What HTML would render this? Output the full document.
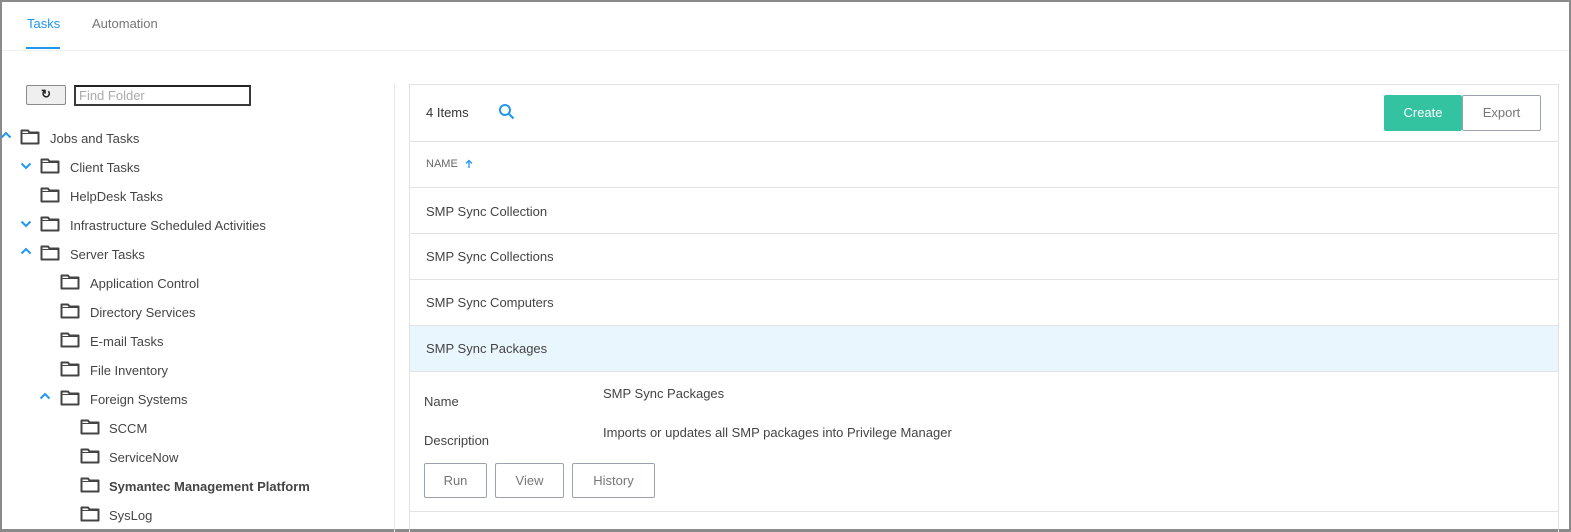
<!DOCTYPE html>
<html><head><meta charset="utf-8"><style>
*{margin:0;padding:0;box-sizing:border-box}
body{width:1571px;height:532px;overflow:hidden;background:#fff;font-family:"Liberation Sans",Arial,sans-serif;color:#444;font-size:13px;position:relative}
.frame{position:absolute;left:0;top:0;width:1571px;height:532px;border:2px solid #8a8a8a;border-bottom-width:3px}
.a{position:absolute;white-space:nowrap}
.fold{position:absolute;width:20px;height:16px}
.chev{position:absolute;width:12px;height:8px}
.row{position:absolute;left:410px;width:1148px;border-bottom:1px solid #e2e2e2}
.btn{position:absolute;border:1px solid #9aa3ad;border-radius:2px;color:#777;font-size:13px;text-align:center;background:#fff}
</style></head><body>
<div class="frame"></div>
<div class="a" style="left:27px;top:16px;color:#2196f3;font-size:13px">Tasks</div>
<div class="a" style="left:26px;top:47px;width:34px;height:2px;background:#2196f3"></div>
<div class="a" style="left:92px;top:16px;color:#777">Automation</div>
<div class="a" style="left:2px;top:50px;width:1567px;height:1px;background:#f0f0f0"></div>

<div class="a" style="left:26px;top:85px;width:40px;height:20px;border:1px solid #8a8a8a;border-radius:2px;background:#efefef;font-size:12px;text-align:center;line-height:17px;color:#222;font-weight:bold">&#8635;</div>
<div class="a" style="left:74px;top:85px;width:177px;height:21px;border:2px solid #3a3a3a;border-top-color:#222;color:#aaa;font-size:13px;padding-left:3px;line-height:17px">Find Folder</div>
<div class="a" style="left:394px;top:83px;width:1px;height:449px;background:#e6e6e6"></div>

<svg width="0" height="0" style="position:absolute"><defs>
<symbol id="f" viewBox="0 0 20 16"><path d="M1.5 1.5 H8 L9.5 3.5 H18.5 V14.5 H1.5 Z" fill="none" stroke="#444" stroke-width="2" stroke-linejoin="round"/><path d="M1.5 4.5 H18.5" stroke="#444" stroke-width="1"/></symbol>
<symbol id="up" viewBox="0 0 12 8"><path d="M1.5 6.5 L6 2 L10.5 6.5" fill="none" stroke="#2196f3" stroke-width="2"/></symbol>
<symbol id="dn" viewBox="0 0 12 8"><path d="M1.5 1.5 L6 6 L10.5 1.5" fill="none" stroke="#2196f3" stroke-width="2"/></symbol>
</defs></svg>

<svg class="chev" style="left:0;top:131px"><use href="#up"/></svg>
<svg class="fold" style="left:20px;top:129px"><use href="#f"/></svg>
<div class="a" style="left:50px;top:131px">Jobs and Tasks</div>

<svg class="chev" style="left:20px;top:162px"><use href="#dn"/></svg>
<svg class="fold" style="left:40px;top:158px"><use href="#f"/></svg>
<div class="a" style="left:70px;top:160px">Client Tasks</div>

<svg class="fold" style="left:40px;top:187px"><use href="#f"/></svg>
<div class="a" style="left:70px;top:189px">HelpDesk Tasks</div>

<svg class="chev" style="left:20px;top:220px"><use href="#dn"/></svg>
<svg class="fold" style="left:40px;top:216px"><use href="#f"/></svg>
<div class="a" style="left:70px;top:218px">Infrastructure Scheduled Activities</div>

<svg class="chev" style="left:20px;top:247px"><use href="#up"/></svg>
<svg class="fold" style="left:40px;top:245px"><use href="#f"/></svg>
<div class="a" style="left:70px;top:247px">Server Tasks</div>

<svg class="fold" style="left:60px;top:274px"><use href="#f"/></svg>
<div class="a" style="left:90px;top:276px">Application Control</div>
<svg class="fold" style="left:60px;top:303px"><use href="#f"/></svg>
<div class="a" style="left:90px;top:305px">Directory Services</div>
<svg class="fold" style="left:60px;top:332px"><use href="#f"/></svg>
<div class="a" style="left:90px;top:334px">E-mail Tasks</div>
<svg class="fold" style="left:60px;top:361px"><use href="#f"/></svg>
<div class="a" style="left:90px;top:363px">File Inventory</div>
<svg class="chev" style="left:39px;top:392px"><use href="#up"/></svg>
<svg class="fold" style="left:60px;top:390px"><use href="#f"/></svg>
<div class="a" style="left:90px;top:392px">Foreign Systems</div>

<svg class="fold" style="left:80px;top:419px"><use href="#f"/></svg>
<div class="a" style="left:109px;top:421px">SCCM</div>
<svg class="fold" style="left:80px;top:448px"><use href="#f"/></svg>
<div class="a" style="left:109px;top:450px">ServiceNow</div>
<svg class="fold" style="left:80px;top:477px"><use href="#f"/></svg>
<div class="a" style="left:109px;top:479px;font-weight:bold">Symantec Management Platform</div>
<svg class="fold" style="left:80px;top:506px"><use href="#f"/></svg>
<div class="a" style="left:109px;top:508px">SysLog</div>

<div class="a" style="left:409px;top:84px;width:1150px;height:448px;border:1px solid #e2e2e2;border-bottom:none"></div>
<div class="row" style="top:85px;height:57px"></div>
<div class="a" style="left:426px;top:105px;color:#333">4 Items</div>
<svg class="a" style="left:498px;top:103px" width="18" height="18" viewBox="0 0 18 18"><circle cx="7" cy="7" r="5" fill="none" stroke="#2196f3" stroke-width="2"/><path d="M10.5 10.5 L15.5 15.5" stroke="#2196f3" stroke-width="2.2"/></svg>
<div class="a" style="left:1384px;top:95px;width:78px;height:36px;background:#33c3a0;border-radius:2px;color:#fff;text-align:center;line-height:36px">Create</div>
<div class="btn" style="left:1462px;top:95px;width:79px;height:36px;line-height:34px">Export</div>

<div class="row" style="top:142px;height:46px"></div>
<div class="a" style="left:426px;top:158px;font-size:11px;color:#666">NAME</div>
<svg class="a" style="left:465px;top:159px" width="8" height="10" viewBox="0 0 8 10"><path d="M4 9 V2 M1 4.5 L4 1.5 L7 4.5" fill="none" stroke="#2196f3" stroke-width="1.3"/></svg>

<div class="row" style="top:188px;height:46px"></div>
<div class="a" style="left:426px;top:204px">SMP Sync Collection</div>
<div class="row" style="top:234px;height:46px"></div>
<div class="a" style="left:426px;top:249px">SMP Sync Collections</div>
<div class="row" style="top:280px;height:46px"></div>
<div class="a" style="left:426px;top:295px">SMP Sync Computers</div>
<div class="row" style="top:326px;height:46px;background:#eaf6fd"></div>
<div class="a" style="left:426px;top:341px">SMP Sync Packages</div>

<div class="row" style="top:372px;height:140px"></div>
<div class="a" style="left:424px;top:394px">Name</div>
<div class="a" style="left:603px;top:386px">SMP Sync Packages</div>
<div class="a" style="left:424px;top:433px">Description</div>
<div class="a" style="left:603px;top:425px">Imports or updates all SMP packages into Privilege Manager</div>
<div class="btn" style="left:424px;top:463px;width:63px;height:35px;line-height:33px">Run</div>
<div class="btn" style="left:495px;top:463px;width:69px;height:35px;line-height:33px">View</div>
<div class="btn" style="left:572px;top:463px;width:83px;height:35px;line-height:33px">History</div>
</body></html>
